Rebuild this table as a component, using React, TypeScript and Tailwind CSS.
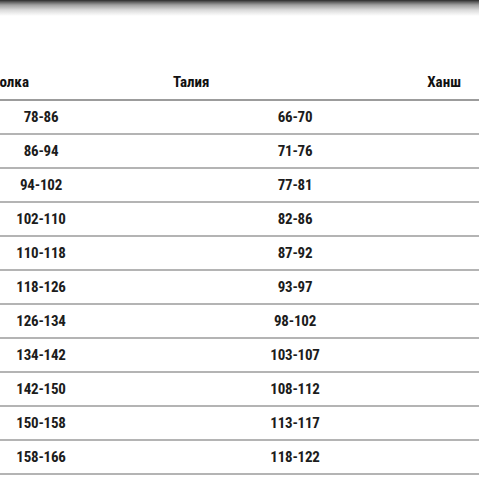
import React from 'react';

const rows: [string, string][] = [
    ['78-86', '66-70'],
    ['86-94', '71-76'],
    ['94-102', '77-81'],
    ['102-110', '82-86'],
    ['110-118', '87-92'],
    ['118-126', '93-97'],
    ['126-134', '98-102'],
    ['134-142', '103-107'],
    ['142-150', '108-112'],
    ['150-158', '113-117'],
    ['158-166', '118-122'],
];

export default function App() {
    return (
        <div className="w-[479px] h-[479px] overflow-hidden bg-white font-['Roboto_Condensed','Roboto',sans-serif]">
            {/* top shadow of the page header */}
            <div className="h-[16px] bg-[linear-gradient(to_bottom,#2a2a2a_0px,#5e5e5e_2px,#a0a0a0_5px,#dadada_10px,#ffffff_16px)]"></div>

            <div className="mt-[49px]">
                {/* header */}
                <div className="h-[36px] flex items-center border-b-2 border-[#9c9c9c] text-[15px] leading-[20px] font-bold text-[#111]">
                    <div className="w-[29px] shrink-0 flex justify-end">
                        <span className="shrink-0 whitespace-nowrap">Обиколка</span>
                    </div>
                    <span className="ml-[144px] whitespace-nowrap">Талия</span>
                    <span className="ml-auto mr-[18px] whitespace-nowrap">Ханш</span>
                </div>

                {/* body */}
                {rows.map(([chest, waist]) => (
                    <div key={chest} className="h-[34px] flex items-center border-b-2 border-[#b4b4b4] text-[15px] leading-[20px] font-bold text-[#1c1c1c] tracking-[-0.2px]">
                        <div className="w-[82px] shrink-0 text-center">{chest}</div>
                        <div className="w-[426px] shrink-0 text-center">{waist}</div>
                    </div>
                ))}
            </div>
        </div>
    );
}
